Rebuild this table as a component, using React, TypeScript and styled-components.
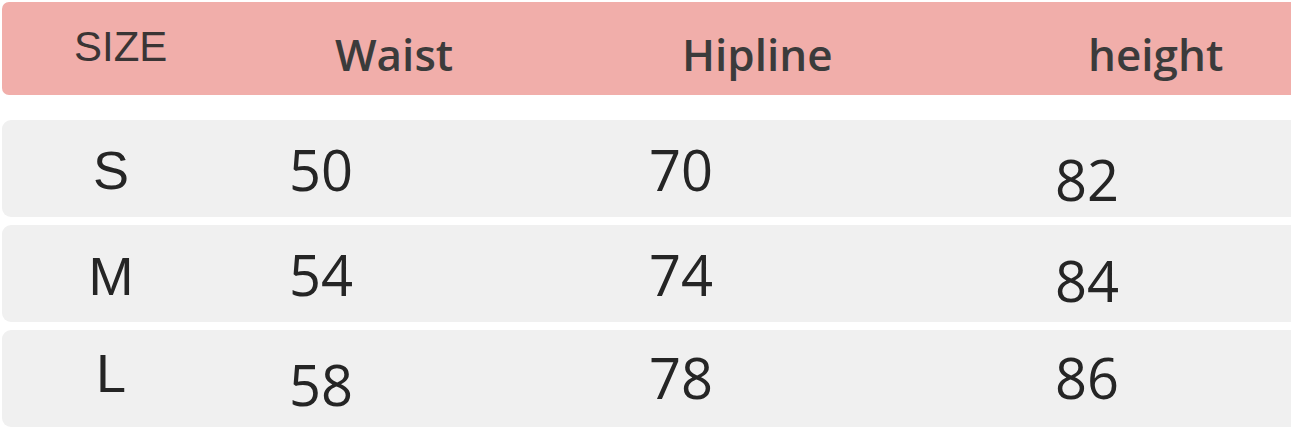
import React from 'react'
import styled, { createGlobalStyle } from 'styled-components'

interface SizeRow {
  label: string
  labelShift: number
  values: { text: string; shift: number }[]
}

const headers = [
  { text: 'Waist', indent: 46 },
  { text: 'Hipline', indent: 33 },
  { text: 'height', indent: 33 },
]

const rows: SizeRow[] = [
  {
    label: 'S',
    labelShift: 1,
    values: [
      { text: '50', shift: 0 },
      { text: '70', shift: 0 },
      { text: '82', shift: 10 },
    ],
  },
  {
    label: 'M',
    labelShift: 2,
    values: [
      { text: '54', shift: 0 },
      { text: '74', shift: 0 },
      { text: '84', shift: 6 },
    ],
  },
  {
    label: 'L',
    labelShift: -6,
    values: [
      { text: '58', shift: 5 },
      { text: '78', shift: -2 },
      { text: '86', shift: -2 },
    ],
  },
]

const App = () => {
  return (
    <>
      <GlobalStyle />
      <Sheet>
        <HeaderBar>
          <SizeTitle>SIZE</SizeTitle>
          {headers.map((item) => (
            <HeaderCell key={item.text} $indent={item.indent}>
              {item.text}
            </HeaderCell>
          ))}
        </HeaderBar>

        {/* 사이즈 표 */}
        <RowList>
          {rows.map((row) => (
            <DataRow key={row.label}>
              <SizeLabel $shift={row.labelShift}>{row.label}</SizeLabel>
              {row.values.map((value, i) => (
                <ValueCell key={i} $shift={value.shift}>
                  {value.text}
                </ValueCell>
              ))}
            </DataRow>
          ))}
        </RowList>
      </Sheet>
    </>
  )
}

export default App

const GlobalStyle = createGlobalStyle`
  html, body {
    margin: 0;
    padding: 0;
    background: #ffffff;
    overflow: hidden;
  }
`

const Sheet = styled.div`
  width: 1310px;
  padding: 2px 0 0 2px;
  display: flex;
  flex-direction: column;
  gap: 25px;
`

const columns = '287px 360px 406px 1fr'

// 헤더
const HeaderBar = styled.div`
  display: grid;
  grid-template-columns: ${columns};
  align-items: center;
  height: 93px;
  background: #f1aeaa;
  border-radius: 7px 0 0 7px;
`
const SizeTitle = styled.div`
  padding-left: 72px;
  margin-top: -4px;
  font-family: 'Liberation Sans', Arial, sans-serif;
  font-size: 42px;
  line-height: 1;
  color: #3a3535;
`
const HeaderCell = styled.div<{ $indent: number }>`
  padding-left: ${(p) => p.$indent}px;
  margin-top: 10px;
  font-family: 'Open Sans', sans-serif;
  font-size: 44px;
  font-weight: 600;
  line-height: 1;
  color: #3b3b3b;
`

// 사이즈 행
const RowList = styled.div`
  display: flex;
  flex-direction: column;
  gap: 8px;
`
const DataRow = styled.div`
  display: grid;
  grid-template-columns: ${columns};
  align-items: center;
  height: 97px;
  background: #f0f0f0;
  border-radius: 9px 0 0 9px;
`
const SizeLabel = styled.div<{ $shift: number }>`
  width: 218px;
  text-align: center;
  margin-top: ${(p) => p.$shift * 2}px;
  font-family: 'Liberation Sans', Arial, sans-serif;
  font-size: 54px;
  line-height: 1;
  color: #252525;
`
const ValueCell = styled.div<{ $shift: number }>`
  margin-top: ${(p) => p.$shift * 2}px;
  font-family: 'Open Sans', sans-serif;
  font-size: 56px;
  line-height: 1;
  color: #252525;
`
